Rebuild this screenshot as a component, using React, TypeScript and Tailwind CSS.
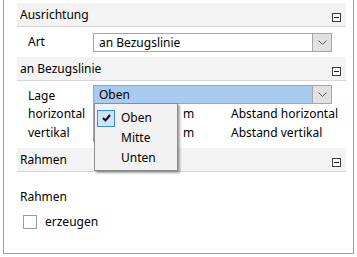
import React from 'react'

const OPTIONS = ['Oben', 'Mitte', 'Unten']

function MinusBox() {
  return (
    <span className="mb-[4px] flex h-[9px] w-[9px] items-center justify-center border border-[#3c3c3c] bg-white">
      <span className="h-[1px] w-[5px] bg-[#1e1e1e]" />
    </span>
  )
}

function Chevron() {
  return (
    <svg width="9" height="5" viewBox="0 0 9 5" className="block">
      <path d="M0.5 0.5 L4.5 4.5 L8.5 0.5" fill="none" stroke="#5a5a5a" strokeWidth="1" />
    </svg>
  )
}

function Header({ title }: { title: string }) {
  return (
    <div className="flex h-[24px] items-stretch justify-between border-b border-[#d6d6d6] bg-[#f3f3f3] pl-[3px] pr-[5px]">
      <span className="self-center">{title}</span>
      <span className="self-end">
        <MinusBox />
      </span>
    </div>
  )
}

function Select({ value, active }: { value: string; active?: boolean }) {
  return (
    <div
      className={`flex h-[19px] w-[239px] border border-[#a5a5a5] ${active ? 'bg-[#a9cbef]' : 'bg-white'}`}
    >
      <span className="flex-1 pl-[5px] leading-[17px]">{value}</span>
      <span className="flex w-[19px] items-center justify-center border-l border-[#a5a5a5] bg-[#e1e1e1]">
        <Chevron />
      </span>
    </div>
  )
}

function ValueRow({ label, hint }: { label: string; hint: string }) {
  return (
    <div className="flex h-[19px] items-center">
      <span className="w-[76px] pl-[11px]">{label}</span>
      <span className="h-[19px] w-[85px] border border-[#a5a5a5] bg-white" />
      <span className="ml-[5px] w-[48px]">m</span>
      <span>{hint}</span>
    </div>
  )
}

export default function App() {
  return (
    <div
      className="h-[257px] w-[357px] bg-white text-[12px] leading-none text-black"
      style={{ fontFamily: '"Noto Sans", "Open Sans", sans-serif' }}
    >
      <div className="ml-[3px] h-[254px] w-[351px] border-x border-b border-[#a0a0a0] pl-[13px] pr-[7px] pt-[3px]">
        <Header title="Ausrichtung" />
        <div className="flex h-[30px] items-center">
          <span className="w-[76px] pl-[11px]">Art</span>
          <Select value="an Bezugslinie" />
        </div>

        <Header title="an Bezugslinie" />
        <div className="flex h-[23px] items-end">
          <span className="w-[76px] self-center pl-[11px] pt-[6px]">Lage</span>
          <div className="relative">
            <Select value="Oben" active />
            <div className="absolute left-[1px] top-[18px] z-10 w-[84px] border border-[#8c8c8c] bg-[#f2f2f2] pb-[2px] pt-[4px] shadow-[2px_2px_2px_rgba(0,0,0,0.35)]">
              {OPTIONS.map((o, i) => (
                <div key={o} className="flex h-[20px] items-center">
                  <span className="ml-[2px] flex h-[18px] w-[18px] items-center justify-center">
                    {i === 0 && (
                      <span className="flex h-[17px] w-[18px] items-center justify-center border border-[#3d8ee0] bg-[#cce4f7]">
                        <svg width="9" height="8" viewBox="0 0 9 8">
                          <path d="M1 4 L3.5 6.5 L8 1" fill="none" stroke="#111" strokeWidth="2" />
                        </svg>
                      </span>
                    )}
                  </span>
                  <span className="ml-[6px]">{o}</span>
                </div>
              ))}
            </div>
          </div>
        </div>
        <ValueRow label="horizontal" hint="Abstand horizontal" />
        <ValueRow label="vertikal" hint="Abstand vertikal" />

        <div className="mt-[6px]">
          <Header title="Rahmen" />
        </div>
        <div className="pl-[3px] pt-[19px]">Rahmen</div>
        <label className="mt-[12px] flex items-center pl-[6px]">
          <span className="h-[14px] w-[14px] border border-[#9a9a9a] bg-white" />
          <span className="ml-[8px]">erzeugen</span>
        </label>
      </div>
    </div>
  )
}
